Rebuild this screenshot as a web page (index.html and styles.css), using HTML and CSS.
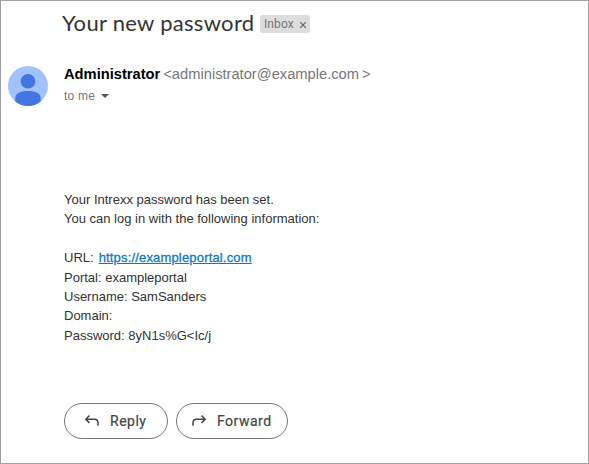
FILE: index.html
```html
<!DOCTYPE html>
<html lang="en">

<head>
    <meta charset="UTF-8">
    <title>Your new password</title>
    <link rel="stylesheet" href="styles.css">
</head>

<body>
    <div class="mail">
        <div class="subject">
            <h1>Your new password</h1>
            <div class="label">
                <span>Inbox</span>
                <svg width="8" height="8" viewBox="0 0 8 8"><path d="M1.2 1.200l5.600 5.600M6.800 1.200l-5.600 5.600"/></svg>
            </div>
        </div>
        <div class="sender">
            <svg width="40" height="40" viewBox="0 0 40 40">
                <clipPath id="round"><circle cx="20" cy="20" r="20"/></clipPath>
                <g clip-path="url(#round)">
                    <rect width="40" height="40" fill="#a0c3ff"/>
                    <circle cx="20" cy="15.300" r="7.300" fill="#4374e0"/>
                    <path d="M7.300 40v-8c0-4.600 5-7 12.700-7s12.700 2.400 12.700 7v8z" fill="#4374e0"/>
                </g>
            </svg>
            <div class="sender-info">
                <div class="from">
                    <span class="name">Administrator</span>
                    <span class="address">&lt;administrator@example.com<span class="close">&gt;</span></span>
                </div>
                <div class="to">
                    <span>to me</span>
                    <span class="arrow"></span>
                </div>
            </div>
        </div>
        <div class="message">
            <p>Your Intrexx password has been set.<br>
            You can log in with the following information:</p>
            <p>URL:<a href="#">https://exampleportal.com</a><br>
            Portal: exampleportal<br>
            Username: SamSanders<br>
            Domain:<br>
            Password: 8yN1s%G&lt;Ic/j</p>
        </div>
        <div class="actions">
            <button class="reply">
                <svg width="16" height="14" viewBox="0 0 16 14"><path d="M5.500 1.500L1.800 5.200l3.700 3.700M2 5.200h8.300q3.700 0 3.700 3.700v2.800"/></svg>
                <span>Reply</span>
            </button>
            <button class="forward">
                <svg width="16" height="14" viewBox="0 0 16 14"><path d="M10.500 1.500l3.700 3.700-3.700 3.700M14 5.200H5.700Q2 5.200 2 8.900v2.800"/></svg>
                <span>Forward</span>
            </button>
        </div>
    </div>
</body>

</html>
```
FILE: styles.css
```css
* {
    box-sizing: border-box;
}

body {
    margin: 0;
    font-family: "Liberation Sans", Arial, sans-serif;
    background-color: #fff;
}

.mail {
    width: 589px;
    height: 464px;
    border: 1px solid #a0a0a0;
    padding: 8px 7px;
}

.subject {
    display: flex;
    align-items: center;
    height: 30px;
    padding-left: 54px;
}

.subject h1 {
    width: 193px;
    margin: 0;
    font-family: Lato, sans-serif;
    font-size: 22px;
    font-weight: 400;
    letter-spacing: 0.3px;
    line-height: 28px;
    padding-bottom: 2px;
    color: #333436;
    white-space: nowrap;
}

.label {
    display: flex;
    align-items: center;
    gap: 5px;
    width: 50px;
    height: 18px;
    margin-left: 5px;
    padding-left: 4px;
    border-radius: 3px;
    background-color: #ddd;
    font-family: Roboto, sans-serif;
    font-size: 12px;
    letter-spacing: 0.1px;
    color: #777;
}

.label svg {
    margin-top: 1px;
    stroke: #666;
    stroke-width: 1.2;
}

.sender {
    display: flex;
    gap: 16px;
    height: 40px;
    margin-top: 27px;
}

.from {
    display: flex;
    gap: 3px;
    height: 18px;
    line-height: 16px;
    font-size: 14.7px;
    white-space: nowrap;
}

.name {
    font-weight: bold;
    color: #000;
}

.address {
    color: #777;
}

.close {
    margin-left: 3px;
}

.to {
    display: flex;
    align-items: center;
    gap: 6px;
    height: 20px;
    margin-top: 2px;
    font-size: 12px;
    letter-spacing: 0.2px;
    color: #777;
}

.arrow {
    border-left: 4px solid transparent;
    border-right: 4px solid transparent;
    border-top: 4px solid #555;
}

.message {
    height: 213px;
    margin-top: 84px;
    padding-left: 56px;
    font-size: 13px;
    line-height: 19.4px;
    color: #333;
    white-space: nowrap;
}

.message p {
    margin: 0 0 19.4px;
}

.message a {
    margin-left: 5px;
    color: #0b78d0;
    letter-spacing: 0.17px;
    -webkit-text-stroke: 0.3px #0b78d0;
}

.actions {
    display: flex;
    gap: 8px;
    padding-left: 56px;
}

.actions button {
    display: flex;
    align-items: center;
    gap: 10px;
    height: 36px;
    padding: 0 0 0 19px;
    border: 1px solid #747775;
    border-radius: 18px;
    background-color: #fff;
    font-family: Roboto, sans-serif;
    font-size: 14px;
    letter-spacing: 0.5px;
    color: #444746;
    -webkit-text-stroke: 0.2px #444746;
}

.actions svg {
    fill: none;
    stroke: #444746;
    stroke-width: 1.5;
}

.actions .reply {
    width: 104px;
}

.actions .forward {
    width: 112px;
    padding-left: 14px;
}
```
